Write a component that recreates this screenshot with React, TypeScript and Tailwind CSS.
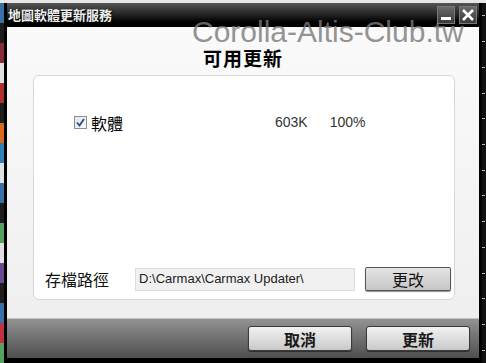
import React from 'react';

const cjk = { fontFamily: '"Noto Sans CJK TC", "Noto Sans", sans-serif' };
const arial = { fontFamily: '"Liberation Sans", Arial, sans-serif' };

const stripeColors = ['#3b6fa8', '#1d1d1d', '#8a2a3a', '#e0e0e0', '#b03030', '#1d1d1d', '#d86a20', '#2e7fb8', '#e0e0e0', '#3b6fa8', '#1d1d1d', '#58a060', '#e0e0e0', '#6a4a90', '#1d1d1d', '#3b6fa8', '#c03040', '#58a060'];

const DesktopStrip: React.FC<{ side: 'left' | 'right' }> = ({ side }) => (
  <div className="flex w-[4px] flex-col bg-[#111]">
    {side === 'left'
      ? stripeColors.map((c, i) => <div key={i} className="flex-1" style={{ backgroundColor: c }} />)
      : Array.from({ length: 14 }).map((_, i) => (
          <div key={i} className="flex flex-1 items-center">
            <div className="h-px w-[3px] bg-[#bbb]" />
          </div>
        ))}
  </div>
);

const BarButton: React.FC<{ label: string }> = ({ label }) => (
  <button
    className="flex h-[25px] w-[104px] items-center justify-center rounded-[3px] border border-[#3a3a3a] bg-gradient-to-b from-[#f2f2f2] to-[#c9c9c9] text-[16px] font-bold text-[#1a1a1a] shadow-[0_1px_1px_rgba(0,0,0,0.5)]"
    style={cjk}
  >
    {label}
  </button>
);

export default function App() {
  return (
    <div className="relative flex h-[363px] w-[486px] flex-col overflow-hidden bg-[#111]">
      <div className="h-[3px] bg-[#e6e6e6]" />
      <div className="flex flex-1">
        <DesktopStrip side="left" />
        <div className="flex w-[478px] flex-col border-x-[3px] border-b-[5px] border-black">
          {/* title bar */}
          <div className="flex h-[24px] items-center justify-between bg-gradient-to-b from-[#555] via-[#222] to-[#000] pl-[1px] pr-[2px]">
            <span className="text-[13px] font-bold text-[#eee] [text-shadow:1px_1px_0_#000]" style={cjk}>
              地圖軟體更新服務
            </span>
            <div className="flex gap-[4px]">
              <div className="flex h-[18px] w-[18px] items-end justify-center border border-[#777] bg-gradient-to-b from-[#6a6a6a] to-[#3a3a3a] pb-[3px]">
                <div className="h-[3px] w-[10px] bg-white" />
              </div>
              <div className="flex h-[18px] w-[18px] items-center justify-center border border-[#777] bg-gradient-to-b from-[#6a6a6a] to-[#3a3a3a]">
                <svg width="14" height="14" viewBox="0 0 14 14">
                  <path d="M2 2 L12 12 M12 2 L2 12" stroke="white" strokeWidth="2.6" />
                </svg>
              </div>
            </div>
          </div>

          {/* body */}
          <div className="flex flex-1 flex-col bg-gradient-to-b from-[#fafafa] to-[#efefef]">
            <div className="flex h-[48px] items-end justify-center pb-[8px]">
              <h1 className="text-[19px] font-bold leading-none tracking-[1px] text-black" style={cjk}>
                可用更新
              </h1>
            </div>
            <div className="ml-[26px] flex h-[225px] w-[422px] flex-col rounded-[6px] border border-[#d6d6d6] bg-white">
              <div className="ml-[40px] mt-[36px] flex items-center">
                <div className="flex h-[13px] w-[13px] items-center justify-center border border-[#8e8f8f] bg-gradient-to-br from-[#e4e4e4] to-[#fafafa]">
                  <svg width="9" height="9" viewBox="0 0 9 9">
                    <path d="M1 4.5 L3.5 7.5 L8 1" stroke="#21518f" strokeWidth="1.8" fill="none" />
                  </svg>
                </div>
                <span className="ml-[4px] text-[16px] leading-none text-black" style={cjk}>
                  軟體
                </span>
                <span className="ml-[152px] text-[14px] text-[#333]" style={arial}>
                  603K
                </span>
                <span className="ml-[22px] text-[14px] text-[#333]" style={arial}>
                  100%
                </span>
              </div>
              <div className="mt-auto mb-[8px] flex items-center">
                <span className="ml-[11px] text-[16px] text-[#111]" style={cjk}>
                  存檔路徑
                </span>
                <div className="ml-[26px] flex h-[23px] w-[220px] items-center border border-[#dcdcdc] bg-[#f0f0f0] pl-[3px] text-[13px] text-[#222]" style={arial}>
                  D:\Carmax\Carmax Updater\
                </div>
                <button
                  className="ml-[10px] flex h-[24px] w-[86px] items-center justify-center rounded-[2px] border border-[#555] bg-gradient-to-b from-[#e4e4e4] to-[#c6c6c6] text-[16px] text-[#111] shadow-[0_1px_1px_rgba(0,0,0,0.45)]"
                  style={cjk}
                >
                  更改
                </button>
              </div>
            </div>
          </div>

          {/* bottom bar */}
          <div className="flex h-[40px] items-center justify-end gap-[14px] border-t border-[#c4c4c4] bg-gradient-to-b from-[#939393] to-[#4f4f4f] pr-[9px]">
            <BarButton label="取消" />
            <BarButton label="更新" />
          </div>
        </div>
        <DesktopStrip side="right" />
      </div>

      {/* watermark over the window */}
      <div className="pointer-events-none absolute left-[192px] top-[19px] text-[30px] leading-[26px] text-[#7a7a7a] opacity-80" style={arial}>
        Corolla-Altis-Club.tw
      </div>
    </div>
  );
}
